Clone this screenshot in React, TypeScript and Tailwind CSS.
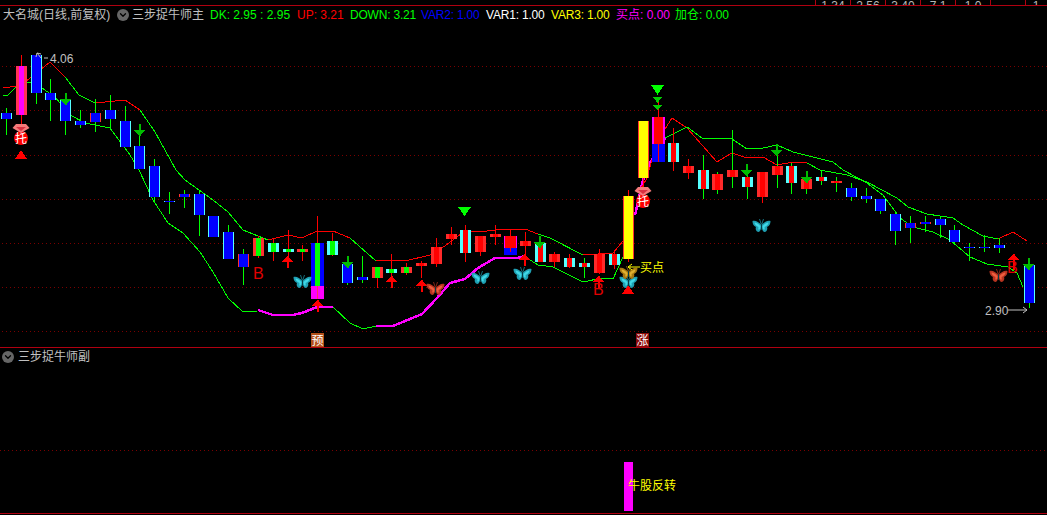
import { ChevronDown } from "lucide-react";

type Kind = "b" | "br" | "r" | "cr" | "cg" | "rg";
type Candle = [number, number, number, number, number, Kind, string?];

const G = "#00ff00";
const R = "#ff0000";
const M = "#ff00ff";
const STEP = 14.82;
const cx = (i: number) => Math.round(6 + i * STEP);

const candles: Candle[] = [
  [0, 113, 119, 108, 135, "b", G],
  [2, 55, 93, 55, 104, "b", G],
  [3, 93, 100, 79, 121, "b", G],
  [4, 99, 121, 93, 135, "b", G],
  [5, 121, 125, 110, 128, "b", G],
  [6, 113, 122, 99, 132, "br", G],
  [7, 110, 119, 95, 129, "b", G],
  [8, 121, 147, 106, 147, "b", G],
  [9, 146, 169, 124, 169, "b", G],
  [10, 166, 197, 159, 203, "b", G],
  [11, 201, 202, 192, 214, "b", G],
  [12, 194, 197, 190, 208, "br", G],
  [13, 194, 215, 191, 236, "b", G],
  [14, 216, 237, 216, 237, "b", G],
  [15, 232, 259, 225, 259, "b", G],
  [16, 254, 267, 249, 285, "br", G],
  [17, 238, 256, 236, 258, "rg", R],
  [18, 243, 252, 238, 261, "cg", R],
  [19, 249, 252, 230, 262, "cg", R],
  [20, 249, 252, 245, 261, "rg", R],
  [22, 241, 255, 233, 256, "cg", R],
  [23, 264, 283, 264, 285, "b", G],
  [24, 277, 280, 256, 283, "b", G],
  [25, 267, 278, 267, 288, "rg", R],
  [26, 269, 273, 254, 280, "cg", R],
  [27, 267, 273, 263, 275, "rg", R],
  [28, 263, 266, 261, 278, "r", R],
  [29, 247, 264, 238, 267, "r", R],
  [30, 234, 239, 227, 245, "r", R],
  [31, 230, 253, 225, 262, "cr", R],
  [32, 236, 252, 236, 256, "r", R],
  [33, 234, 237, 225, 245, "r", R],
  [35, 241, 246, 232, 254, "r", R],
  [36, 243, 262, 243, 262, "cr", R],
  [37, 254, 262, 252, 267, "r", R],
  [38, 258, 267, 254, 268, "cr", R],
  [39, 263, 267, 258, 278, "cr", G],
  [40, 254, 273, 249, 274, "r", R],
  [41, 254, 265, 250, 269, "cr", R],
  [45, 143, 162, 128, 171, "cr", R],
  [46, 166, 173, 159, 179, "r", R],
  [47, 170, 189, 155, 199, "cr", G],
  [48, 174, 190, 172, 194, "r", G],
  [49, 170, 177, 130, 188, "r", G],
  [50, 177, 187, 176, 199, "cr", G],
  [51, 172, 197, 172, 203, "r", R],
  [52, 166, 175, 144, 188, "r", G],
  [53, 166, 183, 163, 194, "cr", G],
  [54, 179, 189, 179, 194, "r", G],
  [55, 177, 181, 171, 185, "cr", G],
  [56, 181, 183, 177, 192, "r", G],
  [57, 188, 197, 183, 201, "b", G],
  [58, 196, 199, 188, 203, "b", G],
  [59, 199, 211, 199, 214, "b", G],
  [60, 214, 231, 211, 245, "b", G],
  [61, 223, 228, 216, 243, "br", G],
  [62, 222, 224, 216, 232, "br", G],
  [63, 219, 225, 216, 238, "b", G],
  [64, 230, 242, 225, 245, "b", G],
  [65, 247, 248, 243, 261, "b", G],
  [66, 247, 248, 235, 252, "b", G],
  [67, 245, 248, 238, 253, "b", G],
  [69, 265, 303, 265, 308, "b", G],
];

const palette: Record<Kind, { edge: string; core: string; side: number }> = {
  b: { edge: "#55ffff", core: "#0000ff", side: 1 },
  br: { edge: "#ff3030", core: "#0000ff", side: 1 },
  r: { edge: "#ff2a2a", core: "#ff0000", side: 3 },
  cr: { edge: "#55ffff", core: "#ff0000", side: 3 },
  cg: { edge: "#55ffff", core: "#00ff00", side: 3 },
  rg: { edge: "#ff3030", core: "#00ff00", side: 3 },
};

const segments: { c: string; w?: number; p: string }[] = [
  { c: G, p: "3,95 8,95 17,86" },
  { c: R, p: "3,88 17,86" },
  { c: G, p: "25,82 33,83 42,88 55,97 70,115 85,123 110,128 130,155 139,170 153,200 168,223 183,233 200,252 213,272 228,298 243,312 257,311" },
  { c: R, p: "25,82 50,62 65,77" },
  { c: G, p: "65,77 79,95 95,103" },
  { c: R, p: "95,103 125,100 140,110" },
  { c: G, p: "140,110 155,132 176,170 185,180 213,200 228,212 243,230 268,240" },
  { c: R, p: "268,240 288,235 302,238 317,231 333,231 350,238" },
  { c: G, p: "350,238 376,261" },
  { c: R, p: "376,261 392,260 405,261 430,255 442,248 465,231 487,231 503,229 525,229 538,234" },
  { c: G, p: "538,234 550,238 583,255" },
  { c: R, p: "583,255 613,253 623,241" },
  { c: M, w: 2.5, p: "258,310 273,315 293,315 302,313 317,307 333,307" },
  { c: G, p: "333,307 350,323 363,329 376,326" },
  { c: M, w: 2.5, p: "376,326 393,326 422,314 437,298 450,283 465,279 478,268 495,258 517,258 525,256" },
  { c: G, p: "527,258 538,265 553,267 583,282 602,278 613,279 623,257" },
  { c: M, w: 2.5, p: "635,215 643,180 650,163 665,138" },
  { c: R, p: "640,190 646,180 658,140 672,118 687,128 717,162 732,153 744,157 763,157 777,165 793,162 807,163" },
  { c: G, p: "665,138 687,127 702,138 732,139 747,149 763,148 777,145 793,152 833,162 843,170 867,183 883,195 900,218 913,227 933,232 950,240 970,257 987,264 1008,267 1017,273 1023,287" },
  { c: G, p: "807,163 820,170 847,175 867,182 897,198 908,207 927,214 953,218 963,225 983,236 998,239" },
  { c: R, p: "998,239 1013,232 1027,241" },
];

const downArrows: [number, number, number][] = [
  [65, 93, 105], [139, 124, 136], [347, 256, 268], [539, 236, 248],
  [746, 164, 176], [776, 144, 156], [806, 171, 183], [1028, 258, 270],
];
const upArrows: [number, number, number][] = [
  [287, 256, 268], [317, 300, 312], [391, 276, 288], [421, 280, 292],
  [524, 254, 266], [598, 276, 288], [1013, 254, 270],
];
const butterflies: [number, number, string, string][] = [
  [302, 282, "#1f9fb2", "#40d8e6"], [480, 278, "#1f9fb2", "#40d8e6"], [522, 274, "#1f9fb2", "#40d8e6"], [628, 282, "#1f9fb2", "#40d8e6"],
  [761, 226, "#1f9fb2", "#40d8e6"], [435, 289, "#b83420", "#ee5f40"], [998, 276, "#b83420", "#ee5f40"], [628, 273, "#a87810", "#e0b030"],
];

function Body({ x, top, bot, edge, core, side, w = 11 }: { x: number; top: number; bot: number; edge: string; core: string; side: number; w?: number }) {
  return (
    <g>
      <rect x={x - (w - 1) / 2} y={top} width={w} height={bot - top} fill={edge} />
      <rect x={x - (w - 1) / 2 + side} y={top} width={w - side * 2} height={bot - top} fill={core} />
    </g>
  );
}

function Wick({ x, a, b, c }: { x: number; a: number; b: number; c: string }) {
  return <rect x={x} y={a} width={1} height={b - a} fill={c} />;
}

function Butterfly({ x, y, c, hi }: { x: number; y: number; c: string; hi: string }) {
  const wing = "M0 -1 C-3 -4 -6 -6 -9 -5 C-9 -2 -8 0 -5.5 1 C-6.5 3 -5 6 -3 6 C-1.5 6 -0.5 3 0 1 Z";
  const inner = "M-1 0 C-3 -2 -5 -3.5 -7 -3.5 C-7 -1.5 -5 0 -3 1 C-3.5 2.5 -3 4 -2.5 4 C-1.5 3 -1 1.5 -1 0 Z";
  return (
    <g transform={`translate(${x + 0.5} ${y})`} shapeRendering="auto">
      <path d={wing} fill={c} />
      <path d={wing} fill={c} transform="scale(-1 1)" />
      <path d={inner} fill={hi} />
      <path d={inner} fill={hi} transform="scale(-1 1)" />
      <path d="M0 -1 L-2 -7 M0 -1 L2 -7" stroke={c} strokeWidth={0.7} fill="none" />
      <rect x={-0.5} y={-2} width={1} height={6} fill="#063c44" />
    </g>
  );
}

function Tuo({ x, y }: { x: number; y: number }) {
  return (
    <g>
      <circle cx={x} cy={y + 9} r={7} fill={R} shapeRendering="auto" />
      <g shapeRendering="auto">
        <path d={`M${x - 8.5} ${y - 1} L${x - 5} ${y - 5} H${x + 5} L${x + 8.5} ${y - 1} L${x} ${y + 4} Z`} fill="#f47a7a" />
        <path d={`M${x - 5} ${y - 2} H${x + 5} L${x} ${y + 2} Z`} fill="#d83040" />
      </g>
      <text x={x} y={y + 14} fontSize={12} textAnchor="middle" fill="#fff">托</text>
    </g>
  );
}

function Legend({ label, value, color, w }: { label: string; value: string; color: string; w: string }) {
  return <span style={{ color }} className={`whitespace-nowrap ${w}`}>{label}: {value}</span>;
}

function PaneIcon() {
  return (
    <span className="flex w-[12px] h-[12px] items-center justify-center rounded-full bg-[#666666]">
      <ChevronDown className="w-[10px] h-[10px] text-black" strokeWidth={3} />
    </span>
  );
}

const topCells = ["1.34", "2.56", "3.40", "7.1", "1.0", "", "1"];

export default function App() {
  return (
    <div className="flex flex-col w-[1047px] h-[515px] overflow-hidden bg-black text-[12px] font-['Liberation_Sans','Noto_Sans_CJK_SC',sans-serif]">
      <div className="flex justify-end h-[6px] pr-[1px] border-b border-[#b00010]">
        {topCells.map((t, i) => (
          <div key={i} className={`flex items-end justify-center h-[5px] overflow-hidden border-l border-[#b00010] text-[#b8b8b8] ${i === 6 ? "w-[21px]" : "w-[35px]"}`}>
            <span className="leading-[9px] translate-y-[6px]">{t}</span>
          </div>
        ))}
      </div>

      <div className="flex items-center h-[18px] shrink-0 text-[#c0c0c0]">
        <span className="ml-[3px] w-[114px] whitespace-nowrap">大名城(日线,前复权)</span>
        <PaneIcon />
        <span className="ml-[3px] w-[78px] whitespace-nowrap">三步捉牛师主</span>
        <div className="flex">
          <span className="w-[87px] text-[#00ff00] whitespace-nowrap">DK: 2.95 : 2.95</span>
          <Legend label="UP" value="3.21" color="#ff0000" w="w-[53px]" />
          <Legend label="DOWN" value="3.21" color="#00ff00" w="w-[71px] tracking-[-0.2px]" />
          <Legend label="VAR2" value="1.00" color="#0000ff" w="w-[65px] tracking-[-0.2px]" />
          <Legend label="VAR1" value="1.00" color="#ffffff" w="w-[65px] tracking-[-0.2px]" />
          <Legend label="VAR3" value="1.00" color="#ffff00" w="w-[65px] tracking-[-0.2px]" />
          <Legend label="买点" value="0.00" color="#ff00ff" w="w-[59px]" />
          <Legend label="加仓" value="0.00" color="#00ff00" w="w-[59px]" />
        </div>
      </div>

      <svg className="block w-full h-[323px] shrink-0" viewBox="0 24 1047 323" shapeRendering="crispEdges">
        {[66, 110, 155, 199, 243, 287, 331].map((y) => (
          <line key={y} x1={2} x2={1047} y1={y + 0.5} y2={y + 0.5} stroke="#7a0000" strokeDasharray="1 3" />
        ))}

        {segments.map((s, i) => (
          <polyline key={i} points={s.p} fill="none" stroke={s.c} strokeWidth={s.w ?? 1} />
        ))}

        {candles.map(([i, top, bot, wt, wb, kind, wick]) => {
          const x = cx(i);
          const p = palette[kind];
          return (
            <g key={i}>
              <Wick x={x} a={wt} b={wb} c={wick ?? R} />
              <Body x={x} top={top} bot={bot} edge={p.edge} core={p.core} side={p.side} />
            </g>
          );
        })}

        {/* candles with stacked signal colours */}
        <Wick x={21} a={55} b={125} c={R} />
        <Body x={21} top={66} bot={115} edge="#ff3355" core={M} side={3} />

        <Wick x={317} a={216} b={299} c={R} />
        <Body x={317} top={243} bot={286} edge="#0000ff" core="#00ff00" side={4} w={13} />
        <Body x={317} top={286} bot={299} edge={M} core={M} side={0} w={13} />
        <rect x={317} y={286} width={1} height={13} fill="#ff3060" />

        <Wick x={510} a={230} b={252} c={R} />
        <Body x={510} top={236} bot={248} edge={M} core={R} side={1} w={13} />
        <rect x={504} y={248} width={13} height={7} fill="#0000ff" />
        <rect x={510} y={248} width={1} height={4} fill={R} />

        <Wick x={628} a={190} b={262} c={R} />
        <Body x={628} top={196} bot={259} edge="#ff3030" core="#ffff00" side={1} />

        <Wick x={643} a={178} b={190} c={R} />
        <Body x={643} top={121} bot={178} edge="#ff3030" core="#ffff00" side={1} />

        <Wick x={658} a={100} b={117} c={R} />
        <Body x={658} top={117} bot={144} edge={M} core={R} side={2} w={13} />
        <rect x={652} y={144} width={13} height={18} fill="#0000ff" />
        <rect x={658} y={144} width={1} height={18} fill={R} />

        {downArrows.map(([x, a, b]) => (
          <g key={x} fill="#00bb00">
            <rect x={x - 0.5} y={a} width={2} height={b - a} />
            <path d={`M${x - 5} ${b - 6} H${x + 6} L${x + 0.5} ${b} Z`} />
          </g>
        ))}
        {upArrows.map(([x, a, b]) => (
          <g key={x} fill={R}>
            <rect x={x - 0.5} y={a} width={2} height={b - a} />
            <path d={`M${x - 5} ${a + 6} H${x + 6} L${x + 0.5} ${a} Z`} />
          </g>
        ))}

        <path d="M458 207 H471 L464.5 216 Z" fill={G} />
        <path d="M651 85 H664 L657.5 95 Z" fill={G} />
        <path d="M653 97 H662 L657.5 103 Z" fill="#00cc00" />
        <path d="M653 105 H662 L657.5 110 Z" fill="#00cc00" />
        <path d="M15 159 H27 L21 150 Z" fill={R} />
        <path d="M622 294 H634 L628 285 Z" fill={R} />

        {butterflies.map(([x, y, c, hi]) => (
          <Butterfly key={`${x}-${y}`} x={x} y={y} c={c} hi={hi} />
        ))}

        <Tuo x={21} y={129} />
        <Tuo x={643} y={192} />

        <g fontSize={16} fill="#e00000">
          <text x={253} y={279}>B</text>
          <text x={593} y={295}>B</text>
          <text x={1007} y={273}>B</text>
        </g>

        <g shapeRendering="auto">
          <path d="M37 53 L36 57 M37 53 L41 54 M37 53 L41 58 M44 58 L48 58" stroke="#c0c0c0" fill="none" />
          <text x={50} y={63} fontSize={12} fill="#c0c0c0">4.06</text>
          <text x={985} y={315} fontSize={12} fill="#c0c0c0">2.90</text>
          <path d="M1008 310 H1027 M1023 307 L1027 310 L1023 313" stroke="#c0c0c0" fill="none" />
          <path d="M628 267 H640 M632 264 L628 267 L632 270" stroke="#ffff00" fill="none" />
          <text x={640} y={272} fontSize={12} fill="#ffff00">买点</text>
        </g>

        <rect x={311} y={333} width={13} height={14} fill="#b5501a" />
        <text x={317.5} y={345} fontSize={12} textAnchor="middle" fill="#fff">预</text>
        <rect x={636} y={333} width={13} height={14} fill="#8b0a0a" />
        <text x={642.5} y={345} fontSize={12} textAnchor="middle" fill="#fff">涨</text>
      </svg>

      <div className="h-px shrink-0 bg-[#b00010]" />

      <div className="flex items-center gap-[4px] h-[18px] shrink-0 pl-[2px] text-[#c0c0c0]">
        <PaneIcon />
        <span className="whitespace-nowrap">三步捉牛师副</span>
      </div>

      <svg className="block w-full h-[147px] shrink-0" viewBox="0 366 1047 147" shapeRendering="crispEdges">
        <line x1={0} x2={1047} y1={450.5} y2={450.5} stroke="#7a0000" strokeDasharray="1 3" />
        <rect x={624} y={462} width={9} height={49} fill={M} />
        <text x={628} y={490} fontSize={12} fill="#ffff00">牛股反转</text>
      </svg>

      <div className="h-px shrink-0 bg-[#b00010]" />
    </div>
  );
}
